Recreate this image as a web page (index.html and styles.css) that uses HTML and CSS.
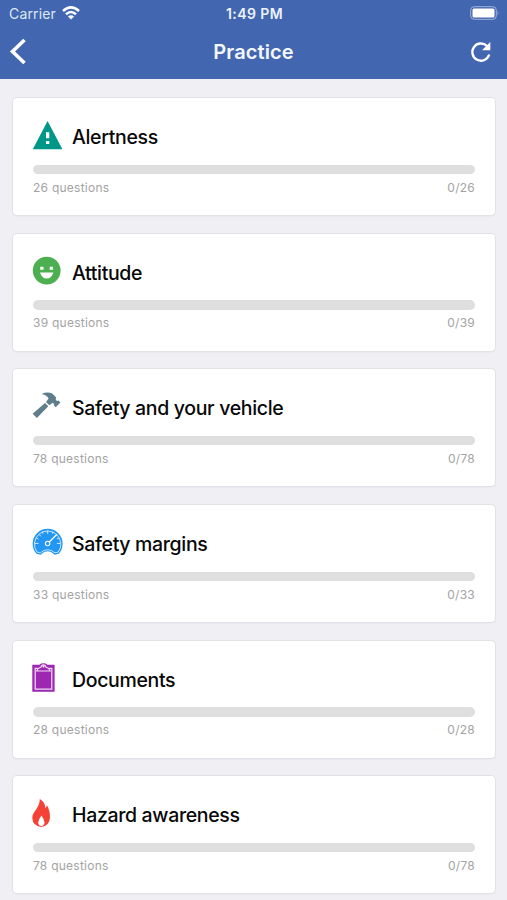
FILE: index.html
```
<!DOCTYPE html>
<html lang="en">
<head>
<meta charset="utf-8">
<title>Practice</title>
<link rel="stylesheet" href="styles.css">
</head>
<body>
<header class="header">
  <div class="status">
    <div class="carrier"><span>Carrier</span>
      <svg class="wifi" width="18" height="14" viewBox="0 0 18 14" fill="none" stroke="#fff" stroke-width="2.5"><path d="M1 5Q9-2.2 17 5M4 8.3Q9 3.8 14 8.3"/><path d="M9 13.6L5.9 10.5Q9 8 12.1 10.5Z" fill="#fff" stroke="none"/></svg>
    </div>
    <div class="time">1:49 PM</div>
    <svg class="battery" width="30" height="14" viewBox="0 0 30 14"><rect x=".7" y=".7" width="25.6" height="12.6" rx="3.5" fill="none" stroke="#a1b3d8"/><rect x="2.5" y="2.5" width="22" height="9" rx="1.5" fill="#fff"/><path d="M27.6 4.5q1.8 2.5 0 5z" fill="#a1b3d8"/></svg>
  </div>
  <nav class="nav">
    <svg class="back" width="18" height="28" viewBox="0 0 18 28"><path d="M15.5 2L3.5 13.5L15.5 25" fill="none" stroke="#fff" stroke-width="3.6"/></svg>
    <h1 class="title">Practice</h1>
    <svg class="reload" width="22" height="22" viewBox="0 0 22 22"><path d="M17.2 5.2A8.6 8.6 0 1 0 19.2 13.5" fill="none" stroke="#fff" stroke-width="2.3"/><path d="M20.3 1V9.3H12Z" fill="#fff"/></svg>
  </nav>
</header>
<main class="list">
  <section class="card">
    <div class="head"><svg class="icon" viewBox="0 0 32 30"><path d="M15.6 0L30.4 28.2H.8Z" fill="#009688"/><path d="M14 11.2h3.3v6H14zM14 20h3.3v3H14z" fill="#fff"/></svg><h2 class="name">Alertness</h2></div>
    <div class="bar"></div>
    <div class="meta"><span>26 questions</span><span>0/26</span></div>
  </section>
  <section class="card">
    <div class="head"><svg class="icon" viewBox="0 0 32 30"><circle cx="14.7" cy="13.6" r="13.9" fill="#4caf50"/><path d="M8.2 9.7h3.3v3H8.2zM17.7 9.7H21v3h-3.3zM8 15.4h13.4q-1.8 6-6.7 6T8 15.4z" fill="#fff"/></svg><h2 class="name">Attitude</h2></div>
    <div class="bar"></div>
    <div class="meta"><span>39 questions</span><span>0/39</span></div>
  </section>
  <section class="card">
    <div class="head"><svg class="icon" viewBox="0 0 32 30"><path d="M13 10.9L16.3 14.2L4.9 26L.6 21.8ZM9.7 2Q15-.6 20.2 1.5L24 5.2L23.8 8L25.2 8.9L26.4 8.5L28.4 10.6L23.7 15.2L21.8 13.3L22.1 11.9L20.6 10.8L17.3 13.3L14 9.9L16.6 6.6Q15 3.2 9.7 2Z" fill="#607d8b"/></svg><h2 class="name">Safety and your vehicle</h2></div>
    <div class="bar"></div>
    <div class="meta"><span>78 questions</span><span>0/78</span></div>
  </section>
  <section class="card">
    <div class="head"><svg class="icon" viewBox="0 0 32 30"><path d="M4.5 25.8A15 15 0 1 1 26.8 25.8L22.7 26.7Q15.6 20 8.6 26.7Z" fill="#2196f3"/><path d="M5.1 24.1A13.2 13.2 0 1 1 26.2 24.1L22.9 24.8Q15.6 18.6 8.4 24.8Z" fill="none" stroke="#d5ecff" stroke-width=".9"/><path d="M15.7 2.5V6M7 6.4l1.9 1.9M3 15.4h3.5M28.3 15.4h-3.5M10.2 3.7l.8 2M21.2 3.7l-.8 2M4.2 10l2.1 1M27 10l-2.1 1" stroke="#e4f3ff" stroke-width=".9"/><path d="M16.5 14.8L25 6.3" stroke="#fff" stroke-width="1.3"/><circle cx="15.6" cy="15.5" r="2.2" fill="#2196f3" stroke="#fff" stroke-width="1.1"/></svg><h2 class="name">Safety margins</h2></div>
    <div class="bar"></div>
    <div class="meta"><span>33 questions</span><span>0/33</span></div>
  </section>
  <section class="card">
    <div class="head"><svg class="icon" viewBox="0 0 32 30"><path d="M.3 .7H7.5Q9-.7 11.4-.7T15.4 .7H22.6V27.7H.3Z" fill="#9c27b0"/><path d="M5.3 4.3H3.2V25.2H19.8V4.3H17.6M4.8 7H18.1L16.8 4.5L13.9 3.2Q13.5 .9 11.4 .9T9 3.2L6.1 4.5Z" fill="none" stroke="#f3daf6" stroke-width="1.2"/><circle cx="11.5" cy="2.4" r="1" fill="#fff"/></svg><h2 class="name">Documents</h2></div>
    <div class="bar"></div>
    <div class="meta"><span>28 questions</span><span>0/28</span></div>
  </section>
  <section class="card">
    <div class="head"><svg class="icon" viewBox="0 0 32 30"><path d="M7.8 0C13 3.5 13.2 7 13.3 9.2Q14.8 8 14.8 6C17 9.5 18.2 14.5 18 18.5Q17.6 26.8 9.2 27.9Q.7 27 .3 19C0 12.5 7.8 9.5 7.8 0Z" fill="#f44336"/><path d="M9.4 16.4Q12.5 20.5 12.5 23.6Q12.2 27 9.4 27Q6.3 27 6.2 23.6Q6.4 20.5 9.4 16.4Z" fill="#fff"/></svg><h2 class="name">Hazard awareness</h2></div>
    <div class="bar"></div>
    <div class="meta"><span>78 questions</span><span>0/78</span></div>
  </section>
</main>
</body>
</html>
```
FILE: styles.css
```
* { box-sizing: border-box; }
body {
  margin: 0;
  height: 900px;
  overflow: hidden;
  background: #efeff4;
  font-family: Inter, "Liberation Sans", sans-serif;
}
.header {
  height: 79px;
  background: #4267b0;
  color: #fff;
}
.status {
  height: 27px;
  padding: 0 7px 0 9px;
  display: grid;
  grid-template-columns: 1fr auto 1fr;
  align-items: center;
  font-size: 14px;
}
.carrier { display: flex; align-items: center; gap: 6px; letter-spacing: .15px; color: #dfe7f6; }
.wifi { margin-top: -2px; }
.time { font-weight: 600; font-size: 14px; letter-spacing: .4px; color: #edf2fc; }
.battery { justify-self: end; margin-top: -1px; }
.nav {
  height: 50px;
  padding: 0 15px 0 9px;
  display: grid;
  grid-template-columns: 1fr auto 1fr;
  align-items: center;
}
.title { margin: 0 -3px 0 3px; font-size: 20px; font-weight: 600; letter-spacing: .1px; color: #f4f7ff; }
.reload { justify-self: end; }
.list {
  padding: 19.3px 12px 0 13px;
  display: flex;
  flex-direction: column;
  gap: 18.6px;
}
.card {
  height: 117px;
  flex: none;
  padding: 23px 20px 0;
  background: #fff;
  border-radius: 4px;
  box-shadow: 0 0 0 1px #e2e2e6, 0 1px 2px #dedee2;
}
.head { height: 32px; display: flex; align-items: center; gap: 8px; }
.icon { width: 32px; height: 30px; margin: -2px 0 0 -1px; overflow: visible; flex: none; }
.name { margin: 0; font-size: 19.5px; line-height: 32px; font-weight: 500; letter-spacing: -.34px; color: #080808; white-space: nowrap; }
.bar { height: 9.5px; margin-top: 11.5px; border-radius: 5px; background: #dfdfdf; }
.meta {
  display: flex;
  justify-content: space-between;
  margin-top: 5.5px;
  font-size: 12px;
  line-height: 16px;
  letter-spacing: .25px;
  color: #a3a3a3;
}
```
